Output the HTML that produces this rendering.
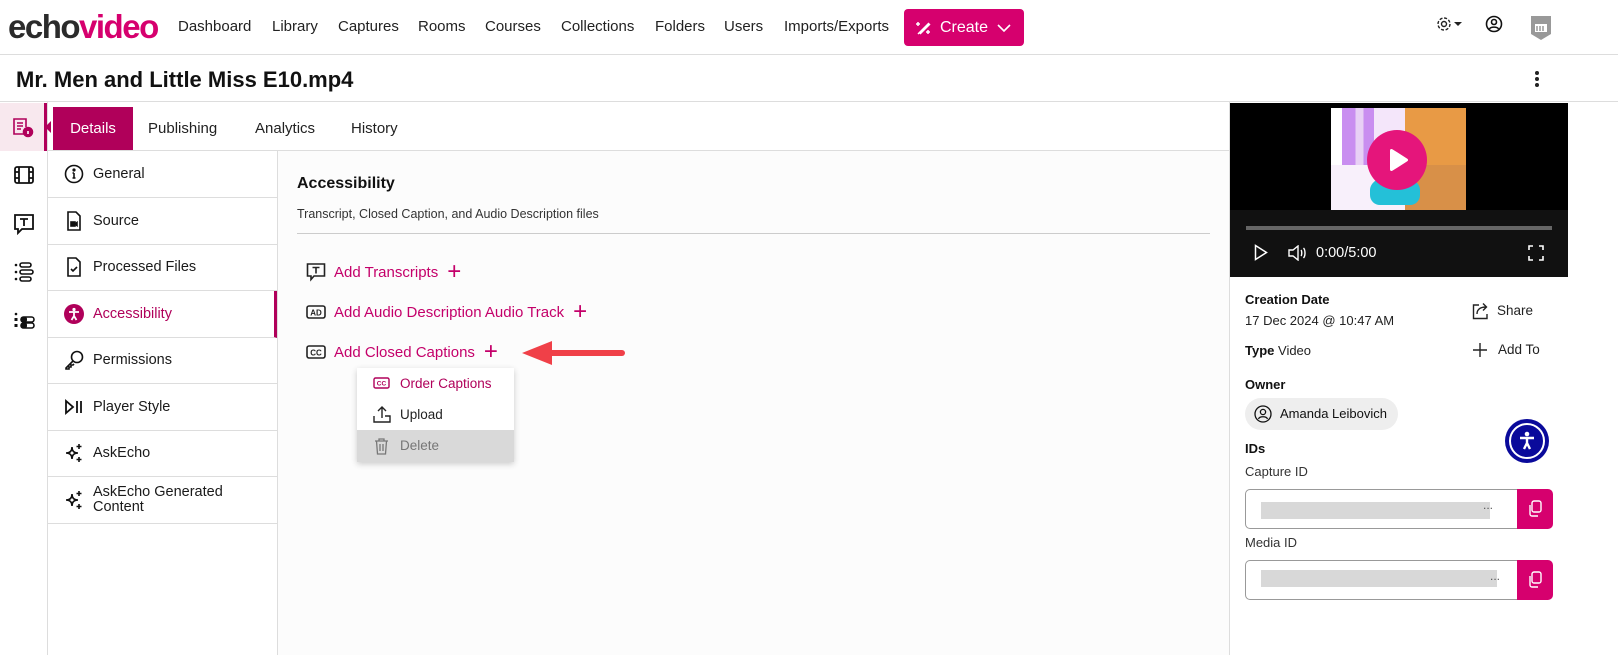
<!DOCTYPE html>
<html><head><meta charset="utf-8"><style>
*{box-sizing:border-box;margin:0;padding:0}
body{width:1618px;height:655px;overflow:hidden;background:#fff;font-family:"Liberation Sans",sans-serif;color:#1a1a1a;position:relative}
.a{position:absolute}
.nav a{position:absolute;top:18px;font-size:15px;color:#222;text-decoration:none}
.pink{color:#d1006b}
.menu{position:absolute;left:48px;width:229px;height:47px;border-bottom:1px solid #ddd;font-size:14.5px;display:flex;align-items:center;padding-left:45px;color:#1a1a1a}
.menu svg{position:absolute;left:16px;top:13px}
.add{position:absolute;left:306px;font-size:15px;color:#c4006a;display:flex;align-items:center}
</style></head><body>
<!-- top nav -->
<div class="a" style="left:8px;top:8px;font-size:33px;font-weight:bold;letter-spacing:-1.5px;line-height:38px"><span style="color:#2b2b2b">echo</span><span style="color:#d6006e">video</span></div>
<div class="nav">
<a style="left:178px">Dashboard</a><a style="left:272px">Library</a><a style="left:338px">Captures</a><a style="left:418px">Rooms</a><a style="left:485px">Courses</a><a style="left:561px">Collections</a><a style="left:655px">Folders</a><a style="left:724px">Users</a><a style="left:784px">Imports/Exports</a>
</div>
<div class="a" style="left:904px;top:9px;width:120px;height:37px;background:#d6006e;border-radius:4px;color:#fff;font-size:16px;line-height:37px;padding-left:36px">Create
<svg class="a" style="left:11px;top:10px" width="17" height="17" viewBox="0 0 17 17" fill="none" stroke="#fff" stroke-width="1.5"><path d="M3 15L14 4M5 15l10-10M3 3v4M1 5h4M13 11v4M11 13h4"/></svg>
<svg class="a" style="left:93px;top:14px" width="14" height="10" viewBox="0 0 14 10" fill="none" stroke="#fff" stroke-width="1.6"><path d="M1 2l6 6 6-6"/></svg></div>
<svg class="a" style="left:1436px;top:16px" width="28" height="16" viewBox="0 0 28 16" fill="none" stroke="#222" stroke-width="1.4"><circle cx="8" cy="8" r="2.5"/><circle cx="8" cy="8" r="6" stroke-dasharray="3 1.7"/><path d="M18 6h8l-4 4z" fill="#222" stroke="none"/></svg>
<svg class="a" style="left:1485px;top:15px" width="18" height="18" viewBox="0 0 18 18" fill="none" stroke="#111" stroke-width="1.6"><circle cx="9" cy="9" r="7.5"/><circle cx="9" cy="7" r="2.5"/><path d="M4.5 14c1-2.5 8-2.5 9 0"/></svg>
<svg class="a" style="left:1529px;top:14px" width="24" height="28" viewBox="0 0 24 28"><path d="M2 2h20v18l-10 6-10-6z" fill="#999"/><path d="M6 10h12v8H6z" fill="#fff"/><path d="M8 12v5M11 12v5M14 12v5" stroke="#999" stroke-width="1.5"/></svg>
<div class="a" style="left:0;top:54px;width:1618px;height:1px;background:#ddd"></div>
<!-- title -->
<div class="a" style="left:16px;top:67px;font-size:22px;font-weight:bold;color:#111">Mr. Men and Little Miss E10.mp4</div>
<div class="a" style="left:1535px;top:71px;width:4px;height:4px;border-radius:50%;background:#222;box-shadow:0 6px 0 #222,0 12px 0 #222"></div>
<div class="a" style="left:0;top:101px;width:1618px;height:1px;background:#ddd"></div>
<!-- left rail -->
<div class="a" style="left:47px;top:102px;width:1px;height:553px;background:#ddd"></div>
<div class="a" style="left:0;top:103px;width:45px;height:48px;background:#f8e8ee"></div>
<div class="a" style="left:44px;top:103px;width:3px;height:48px;background:#b0005a"></div>
<div class="a" style="left:39px;top:121px;width:0;height:0;border:6px solid transparent;border-right-color:#b0005a"></div>
<svg class="a" style="left:12px;top:117px" width="22" height="22" viewBox="0 0 22 22" fill="none" stroke="#b0005a" stroke-width="1.6"><path d="M13 17H2V2h12v8"/><path d="M5 6h6M5 9h6M5 12h4"/><circle cx="16" cy="15" r="4.5" fill="#b0005a"/><path d="M16 14v3" stroke="#fff"/></svg>
<svg class="a" style="left:14px;top:166px" width="20" height="18" viewBox="0 0 20 18" fill="none" stroke="#111" stroke-width="1.8"><rect x="1" y="1" width="18" height="16" rx="2"/><path d="M5 1v16M15 1v16M1 6h4M1 12h4M15 6h4M15 12h4"/></svg>
<svg class="a" style="left:14px;top:214px" width="20" height="21" viewBox="0 0 20 21" fill="none" stroke="#111" stroke-width="1.8"><path d="M1 1h18v14H8l-4 4v-4H1z"/><path d="M6 5h8M10 5v7"/></svg>
<svg class="a" style="left:14px;top:262px" width="20" height="20" viewBox="0 0 20 20" fill="#111"><circle cx="2" cy="3" r="1.3"/><circle cx="2" cy="10" r="1.3"/><circle cx="2" cy="17" r="1.3"/><rect x="6" y="1" width="11" height="4" rx="2" fill="none" stroke="#111" stroke-width="1.6"/><rect x="6" y="8" width="13" height="4" rx="2" fill="none" stroke="#111" stroke-width="1.6"/><rect x="6" y="15" width="11" height="4" rx="2" fill="none" stroke="#111" stroke-width="1.6"/></svg>
<svg class="a" style="left:14px;top:312px" width="21" height="17" viewBox="0 0 21 17" fill="#111"><circle cx="2" cy="2" r="1.3"/><rect x="0.5" y="6" width="3" height="3"/><rect x="0.5" y="12" width="3" height="3"/><rect x="7" y="5" width="13" height="5" rx="2.5" fill="none" stroke="#111" stroke-width="1.6"/><rect x="7" y="11" width="13" height="5" rx="2.5" fill="none" stroke="#111" stroke-width="1.6"/><rect x="7" y="11" width="6" height="5" rx="2"/><rect x="7" y="5" width="6" height="5" rx="2"/></svg>
<!-- tabs -->
<div class="a" style="left:53px;top:107px;width:80px;height:44px;background:#b0005a;color:#fff;font-size:15px;line-height:44px;text-align:center">Details</div>
<div class="a" style="left:148px;top:120px;font-size:15px;color:#222">Publishing</div>
<div class="a" style="left:255px;top:120px;font-size:15px;color:#222">Analytics</div>
<div class="a" style="left:351px;top:120px;font-size:15px;color:#222">History</div>
<div class="a" style="left:48px;top:150px;width:1181px;height:1px;background:#ddd"></div>
<!-- content bg -->
<div class="a" style="left:277px;top:151px;width:952px;height:504px;background:#fcfcfc;border-left:1px solid #ddd"></div>
<!-- side menu -->
<div class="menu" style="top:151px"><svg width="20" height="20" viewBox="0 0 20 20" fill="none" stroke="#111" stroke-width="1.6"><circle cx="10" cy="10" r="8.5"/><path d="M10 9v5M8.5 14h3M8.5 9H10"/><circle cx="10" cy="6" r="0.8" fill="#111"/></svg>General</div>
<div class="menu" style="top:198px"><svg width="20" height="20" viewBox="0 0 20 20" fill="none" stroke="#111" stroke-width="1.6"><path d="M4 1h8l4 4v14H4z"/><rect x="7" y="11" width="4" height="4" fill="#111"/><path d="M11 13l2-1.5v3z" fill="#111"/></svg>Source</div>
<div class="menu" style="top:244px"><svg width="20" height="20" viewBox="0 0 20 20" fill="none" stroke="#111" stroke-width="1.6"><path d="M4 1h8l4 4v14H4z"/><path d="M7 12l2 2 4-4"/></svg>Processed Files</div>
<div class="menu" style="top:291px;color:#b0005a;border-right:3px solid #b0005a"><svg width="20" height="20" viewBox="0 0 20 20"><circle cx="10" cy="10" r="10" fill="#b0005a"/><circle cx="10" cy="5.5" r="1.6" fill="#fff"/><path d="M5 8h10M10 8v4l-2.5 4M10 12l2.5 4" stroke="#fff" stroke-width="1.8" fill="none"/></svg>Accessibility</div>
<div class="menu" style="top:337px"><svg width="20" height="20" viewBox="0 0 20 20" fill="none" stroke="#111" stroke-width="1.6"><circle cx="13" cy="7" r="5.5"/><path d="M9 11l-7 7v1h3v-2h2v-2h2l1-1"/></svg>Permissions</div>
<div class="menu" style="top:384px"><svg width="20" height="20" viewBox="0 0 20 20" fill="none" stroke="#111" stroke-width="1.8"><path d="M2 4v12l7-6z"/><path d="M13 4v12M17 4v12"/></svg>Player Style</div>
<div class="menu" style="top:430px"><svg width="20" height="20" viewBox="0 0 20 20" fill="none" stroke="#111" stroke-width="1.6"><path d="M8 4c0 4 2 6 6 6-4 0-6 2-6 6 0-4-2-6-6-6 4 0 6-2 6-6z"/><path d="M15 1v5M12.5 3.5h5M15 14v5M12.5 16.5h5"/></svg>AskEcho</div>
<div class="menu" style="top:477px;line-height:15px"><svg width="20" height="20" viewBox="0 0 20 20" fill="none" stroke="#111" stroke-width="1.6"><path d="M8 4c0 4 2 6 6 6-4 0-6 2-6 6 0-4-2-6-6-6 4 0 6-2 6-6z"/><path d="M15 1v5M12.5 3.5h5M15 14v5M12.5 16.5h5"/></svg>AskEcho Generated<br>Content</div>
<!-- content -->
<div class="a" style="left:297px;top:175px;font-size:16px;font-weight:bold;color:#111">Accessibility</div>
<div class="a" style="left:297px;top:207px;font-size:12.5px;color:#333">Transcript, Closed Caption, and Audio Description files</div>
<div class="a" style="left:297px;top:233px;width:913px;height:1px;background:#ccc"></div>
<div class="add" style="top:262px"><svg width="20" height="20" viewBox="0 0 20 20" fill="none" stroke="#222" stroke-width="1.6" style="margin-right:8px"><path d="M1.5 2h17v12H8l-3 3.5V14H1.5z"/><path d="M6.5 5.5h7M10 5.5v6"/></svg>Add Transcripts<span style="font-size:24px;margin-left:9px;font-weight:300;line-height:20px">+</span></div>
<div class="add" style="top:302px"><svg width="20" height="20" viewBox="0 0 20 20" style="margin-right:8px"><rect x="1" y="4" width="18" height="12" rx="2" fill="none" stroke="#222" stroke-width="1.6"/><text x="10" y="13.5" font-size="8" font-weight="bold" text-anchor="middle" font-family="Liberation Sans" fill="#222">AD</text></svg>Add Audio Description Audio Track<span style="font-size:24px;margin-left:9px;font-weight:300;line-height:20px">+</span></div>
<div class="add" style="top:342px"><svg width="20" height="20" viewBox="0 0 20 20" style="margin-right:8px"><rect x="1" y="4" width="18" height="12" rx="2" fill="none" stroke="#222" stroke-width="1.6"/><text x="10" y="13.5" font-size="8" font-weight="bold" text-anchor="middle" font-family="Liberation Sans" fill="#222">CC</text></svg>Add Closed Captions<span style="font-size:24px;margin-left:9px;font-weight:300;line-height:20px">+</span></div>
<svg class="a" style="left:520px;top:338px" width="105" height="30" viewBox="0 0 105 30"><path d="M30 12h72a3 3 0 0 1 0 6H30z" fill="#f04048"/><path d="M2 15L32 3v24z" fill="#f04048"/></svg>
<!-- dropdown -->
<div class="a" style="left:357px;top:368px;width:157px;height:94px;background:#fff;box-shadow:0 2px 6px rgba(0,0,0,.2)">
<div class="a" style="left:0;top:0;width:157px;height:31px;font-size:13.5px;color:#b0005a;line-height:31px;padding-left:43px">Order Captions<svg class="a" style="left:16px;top:9px" width="17" height="12" viewBox="0 0 17 12"><rect x="1" y="1" width="15" height="10" rx="1.5" fill="none" stroke="#b0005a" stroke-width="1.4"/><text x="8.5" y="8.5" font-size="6.5" font-weight="bold" text-anchor="middle" font-family="Liberation Sans" fill="#b0005a">CC</text></svg></div>
<div class="a" style="left:0;top:31px;width:157px;height:31px;font-size:13.5px;color:#222;line-height:31px;padding-left:43px">Upload<svg class="a" style="left:16px;top:7px" width="18" height="17" viewBox="0 0 18 17" fill="none" stroke="#222" stroke-width="1.4"><path d="M1 10v6h16v-6h-5M9 12V1M5 5l4-4 4 4"/></svg></div>
<div class="a" style="left:0;top:62px;width:157px;height:32px;background:#d9d9d9;font-size:13.5px;color:#777;line-height:32px;padding-left:43px">Delete<svg class="a" style="left:17px;top:8px" width="15" height="17" viewBox="0 0 15 17" fill="none" stroke="#777" stroke-width="1.3"><path d="M1 3h13M5 3V1h5v2M2.5 3l1 13h8l1-13M6 6v7M9 6v7"/></svg></div>
</div>
<!-- right panel -->
<div class="a" style="left:1229px;top:102px;width:1px;height:553px;background:#ddd"></div>
<div class="a" style="left:1230px;top:103px;width:338px;height:107px;background:#000"></div>
<div class="a" style="left:1331px;top:108px;width:135px;height:102px;background:linear-gradient(90deg,#fff 0 8%,#c98ef0 8% 18%,#e8d0f5 18% 24%,#c98ef0 24% 32%,#f4e6fa 32% 55%,#e89a45 55% 100%)"></div>
<div class="a" style="left:1331px;top:165px;width:135px;height:45px;background:linear-gradient(90deg,#f8f0fb 0 55%,#d89048 55% 100%)"></div>
<div class="a" style="left:1370px;top:175px;width:50px;height:30px;border-radius:50% 50% 10px 10px;background:#24c0d8"></div>
<div class="a" style="left:1367px;top:130px;width:60px;height:60px;border-radius:50%;background:#e5157b"></div>
<svg class="a" style="left:1387px;top:148px" width="22" height="24" viewBox="0 0 22 24"><path d="M3 2.5v19a1.5 1.5 0 0 0 2.3 1.3l15-9.5a1.5 1.5 0 0 0 0-2.6l-15-9.5A1.5 1.5 0 0 0 3 2.5z" fill="#fff"/></svg>
<div class="a" style="left:1230px;top:210px;width:338px;height:67px;background:#111"></div>
<div class="a" style="left:1246px;top:226px;width:306px;height:4px;background:#666"></div>
<svg class="a" style="left:1254px;top:244px" width="14" height="17" viewBox="0 0 14 17" fill="none" stroke="#fff" stroke-width="1.5"><path d="M1.5 1.5v14l11-7z"/></svg>
<svg class="a" style="left:1288px;top:245px" width="20" height="16" viewBox="0 0 20 16" fill="none" stroke="#fff" stroke-width="1.4"><path d="M1 5h4l5-4v14l-5-4H1z"/><path d="M13 5c1 1 1 5 0 6M15.5 3c2 2 2 8 0 10"/></svg>
<div class="a" style="left:1316px;top:245px;font-size:14.5px;color:#fff">0:00/5:00</div>
<svg class="a" style="left:1528px;top:245px" width="16" height="16" viewBox="0 0 16 16" fill="none" stroke="#fff" stroke-width="1.6"><path d="M1 5V1h4M11 1h4v4M15 11v4h-4M5 15H1v-4"/></svg>
<div class="a" style="left:1245px;top:292px;font-size:13px;font-weight:bold;color:#111">Creation Date</div>
<div class="a" style="left:1245px;top:313px;font-size:13px;color:#222">17 Dec 2024 @ 10:47 AM</div>
<svg class="a" style="left:1472px;top:302px" width="18" height="18" viewBox="0 0 18 18" fill="none" stroke="#222" stroke-width="1.4"><path d="M7 3H1.5v13.5H15V12"/><path d="M5 12c0-5 4-7 9-7M11 1.5L14.5 5 11 8.5"/></svg>
<div class="a" style="left:1497px;top:303px;font-size:13.5px;color:#222">Share</div>
<div class="a" style="left:1245px;top:343px;font-size:13px;color:#222"><b style="color:#111">Type</b> Video</div>
<svg class="a" style="left:1473px;top:343px" width="14" height="14" viewBox="0 0 14 14" stroke="#222" stroke-width="1.4"><path d="M7 0v14M0 7h14"/></svg>
<div class="a" style="left:1498px;top:342px;font-size:13.5px;color:#222">Add To</div>
<div class="a" style="left:1245px;top:377px;font-size:13px;font-weight:bold;color:#111">Owner</div>
<div class="a" style="left:1245px;top:398px;width:153px;height:32px;border-radius:16px;background:#eee;font-size:13px;color:#111;line-height:32px;padding-left:35px">Amanda Leibovich<svg class="a" style="left:9px;top:7px" width="18" height="18" viewBox="0 0 18 18" fill="none" stroke="#111" stroke-width="1.3"><circle cx="9" cy="9" r="8"/><circle cx="9" cy="7" r="2.6"/><path d="M4.5 14c1-3 8-3 9 0"/></svg></div>
<div class="a" style="left:1505px;top:419px;width:44px;height:44px;border-radius:50%;background:#0a0a9b"></div>
<div class="a" style="left:1509px;top:423px;width:36px;height:36px;border-radius:50%;border:2px solid #fff"></div>
<svg class="a" style="left:1515px;top:429px" width="24" height="24" viewBox="0 0 24 24"><circle cx="12" cy="5" r="2.3" fill="#fff"/><path d="M5 9h14M12 9v5l-3 6M12 14l3 6" stroke="#fff" stroke-width="2.4" fill="none"/></svg>
<div class="a" style="left:1245px;top:441px;font-size:13px;font-weight:bold;color:#111">IDs</div>
<div class="a" style="left:1245px;top:464px;font-size:13px;color:#333">Capture ID</div>
<div class="a" style="left:1245px;top:489px;width:273px;height:40px;border:1px solid #999;border-radius:5px 0 0 5px;background:#fff"></div>
<div class="a" style="left:1261px;top:502px;width:229px;height:17px;background:#d8d8d8"></div>
<div class="a" style="left:1483px;top:498px;font-size:12px;color:#555">...</div>
<div class="a" style="left:1517px;top:489px;width:36px;height:40px;background:#d6006e;border-radius:0 5px 5px 0"></div>
<svg class="a" style="left:1527px;top:500px" width="16" height="17" viewBox="0 0 16 17" fill="none" stroke="#fff" stroke-width="1.4"><rect x="5" y="1" width="9" height="11" rx="2"/><path d="M3 5v9a2 2 0 0 0 2 2h6"/></svg>
<div class="a" style="left:1245px;top:535px;font-size:13px;color:#333">Media ID</div>
<div class="a" style="left:1245px;top:560px;width:273px;height:40px;border:1px solid #999;border-radius:5px 0 0 5px;background:#fff"></div>
<div class="a" style="left:1261px;top:570px;width:236px;height:17px;background:#d8d8d8"></div>
<div class="a" style="left:1490px;top:569px;font-size:12px;color:#555">...</div>
<div class="a" style="left:1517px;top:560px;width:36px;height:40px;background:#d6006e;border-radius:0 5px 5px 0"></div>
<svg class="a" style="left:1527px;top:571px" width="16" height="17" viewBox="0 0 16 17" fill="none" stroke="#fff" stroke-width="1.4"><rect x="5" y="1" width="9" height="11" rx="2"/><path d="M3 5v9a2 2 0 0 0 2 2h6"/></svg>
</body></html>
